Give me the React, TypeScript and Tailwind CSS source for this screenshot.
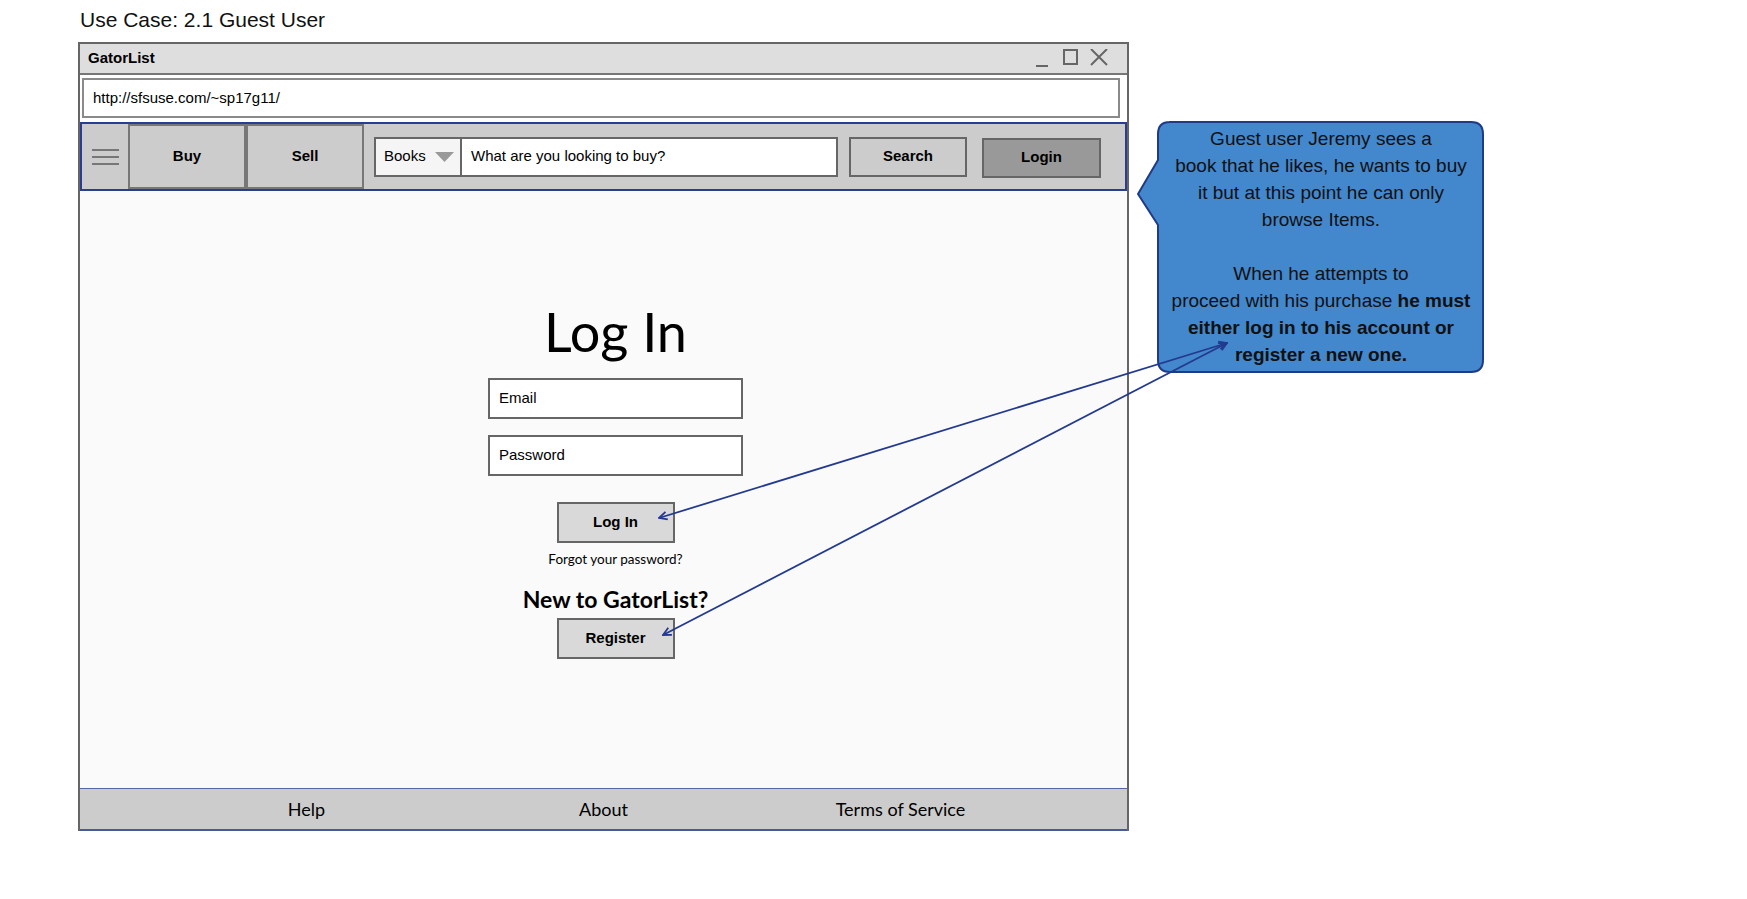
import React from 'react';

const WindowControls = () => (
    <svg width="72" height="20" viewBox="0 0 72 20" fill="none" stroke="#666" strokeWidth="2">
        <line x1="0" y1="17" x2="12" y2="17" />
        <rect x="28" y="1" width="13" height="14" />
        <path d="M55 0 L71 16 M71 0 L55 16" />
    </svg>
);

const Arrows = () => (
    <svg className="absolute inset-0 pointer-events-none" width="1747" height="899" viewBox="0 0 1747 899">
        <defs>
            <marker id="head" viewBox="0 0 10 10" refX="9" refY="5" markerWidth="10" markerHeight="10" markerUnits="userSpaceOnUse" orient="auto-start-reverse">
                <path d="M1 1 L9 5 L1 9" fill="none" stroke="#233a8e" strokeWidth="1.8" />
            </marker>
        </defs>
        <line x1="1227" y1="343" x2="659" y2="518" stroke="#233a8e" strokeWidth="1.8" markerStart="url(#head)" markerEnd="url(#head)" />
        <line x1="1227" y1="343" x2="663" y2="635" stroke="#233a8e" strokeWidth="1.8" markerStart="url(#head)" markerEnd="url(#head)" />
    </svg>
);

const Callout = () => (
    <div className="relative w-[347px] h-[252px] mt-[121px] ml-[8px]">
        <svg className="absolute inset-0" width="347" height="252" viewBox="0 0 347 252">
            <path
                d="M32 1 H334 Q346 1 346 13 V239 Q346 251 334 251 H33 Q21 251 21 239 V104 L1 73 L21 39 V13 Q21 1 33 1 Z"
                fill="#4387cd"
                stroke="#1f3a86"
                strokeWidth="2"
            />
        </svg>
        <div className="relative pl-[21px] pt-[4px] text-center text-[19px] leading-[27px] text-[#111] whitespace-nowrap">
            Guest user Jeremy sees a<br />
            book that he likes, he wants to buy<br />
            it but at this point he can only<br />
            browse Items.<br />
            <br />
            When he attempts to<br />
            proceed with his purchase <b>he must</b><br />
            <b>either log in to his account or</b><br />
            <b>register a new one.</b>
        </div>
    </div>
);

export default function App() {
    return (
        <div className="relative w-[1747px] h-[899px] bg-white overflow-hidden font-['Liberation_Sans',Arial,sans-serif] text-black">
            <div className="flex items-start pl-[78px]">

                {/* Левая колонка: заголовок + окно */}
                <div className="flex flex-col">
                    <div className="h-[42px] pt-[8px] pl-[2px] text-[21px] leading-[24px] text-[#111]">
                        Use Case: 2.1 Guest User
                    </div>

                    <div className="w-[1051px] h-[789px] flex flex-col border-x-2 border-t-2 border-[#666]">

                        {/* Title bar */}
                        <div className="h-[31px] shrink-0 flex items-center justify-between bg-[#dedede] border-b-2 border-[#777] pl-[8px] pr-[19px]">
                            <span className="text-[15px] font-bold">GatorList</span>
                            <WindowControls />
                        </div>

                        {/* Адресная строка */}
                        <div className="mt-[3px] ml-[2px] mr-[7px] h-[40px] shrink-0 flex items-center bg-white border-2 border-[#8a8a8a] px-[9px] text-[15px]">
                            http://sfsuse.com/~sp17g11/
                        </div>

                        {/* Навигация */}
                        <div className="mt-[4px] h-[69px] shrink-0 flex items-center bg-[#cccccc] border-2 border-[#2a3d8f]">
                            <div className="w-[46px] self-stretch flex flex-col items-center justify-center gap-[5px]">
                                <div className="w-[27px] h-[2px] bg-[#777]" />
                                <div className="w-[27px] h-[2px] bg-[#777]" />
                                <div className="w-[27px] h-[2px] bg-[#777]" />
                            </div>
                            <div className="w-[118px] self-stretch flex items-center justify-center border-2 border-[#777] text-[15px] font-bold">Buy</div>
                            <div className="w-[118px] self-stretch flex items-center justify-center border-2 border-[#777] text-[15px] font-bold">Sell</div>

                            <div className="ml-[10px] w-[88px] h-[40px] flex items-center justify-between bg-[#f5f5f5] border-2 border-[#666] pl-[8px] pr-[6px] text-[15px]">
                                <span>Books</span>
                                <svg width="19" height="10" viewBox="0 0 19 10">
                                    <path d="M0 0 H19 L9.5 10 Z" fill="#999" />
                                </svg>
                            </div>
                            <div className="w-[376px] h-[40px] flex items-center bg-white border-2 border-l-0 border-[#666] pl-[9px] text-[15px]">
                                What are you looking to buy?
                            </div>

                            <div className="ml-[11px] w-[118px] h-[40px] flex items-center justify-center bg-[#cccccc] border-2 border-[#666] text-[15px] font-bold">Search</div>
                            <div className="ml-[15px] mt-[2px] w-[119px] h-[40px] flex items-center justify-center bg-[#999999] border-2 border-[#666] text-[15px] font-bold">Login</div>
                        </div>

                        {/* Форма входа */}
                        <div className="flex-1 bg-[#fafafa] flex flex-col items-center pl-[24px] pt-[109px]">
                            <h1 className="font-['Lato',sans-serif] text-[54px] leading-[64px] font-normal">Log In</h1>

                            <div className="mt-[14px] w-[255px] h-[41px] flex items-center bg-white border-2 border-[#666] px-[9px] text-[15px]">Email</div>
                            <div className="mt-[16px] w-[255px] h-[41px] flex items-center bg-white border-2 border-[#666] px-[9px] text-[15px]">Password</div>

                            <div className="mt-[26px] w-[118px] h-[41px] flex items-center justify-center bg-[#d9d9d9] border-2 border-[#666] text-[15px] font-bold">Log In</div>

                            <div className="mt-[8px] font-['Lato',sans-serif] text-[13.5px] leading-[16px]">Forgot your password?</div>

                            <div className="mt-[18px] font-['Lato',sans-serif] text-[23px] leading-[28px] font-bold">New to GatorList?</div>

                            <div className="mt-[5px] w-[118px] h-[41px] flex items-center justify-center bg-[#d9d9d9] border-2 border-[#666] text-[15px] font-bold">Register</div>
                        </div>

                        {/* Футер */}
                        <div className="h-[43px] shrink-0 flex items-center justify-center bg-[#cccccc] border-t border-b-2 border-t-[#5566a8] border-b-[#4a5a98] font-['Lato',sans-serif] text-[18px]">
                            <span className="w-[297px] text-center">Help</span>
                            <span className="w-[297px] text-center">About</span>
                            <span className="w-[297px] text-center">Terms of Service</span>
                        </div>
                    </div>
                </div>

                <Callout />
            </div>

            <Arrows />
        </div>
    );
}
